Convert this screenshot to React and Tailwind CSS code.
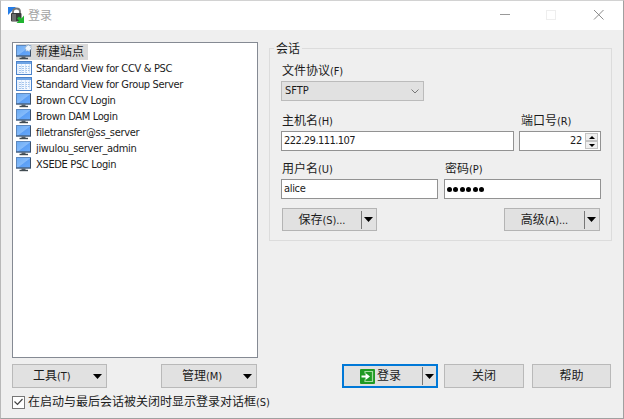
import React from 'react';

const SITES = [
  { icon: 'view', name: 'Standard View for CCV & PSC' },
  { icon: 'view', name: 'Standard View for Group Server' },
  { icon: 'site', name: 'Brown CCV Login' },
  { icon: 'site', name: 'Brown DAM Login' },
  { icon: 'site', name: 'filetransfer@ss_server' },
  { icon: 'site', name: 'jiwulou_server_admin' },
  { icon: 'site', name: 'XSEDE PSC Login' },
];

const CJK = "font-['Noto_Sans_CJK_SC',sans-serif] text-[12px]";
const LATIN = "font-['DejaVu_Sans_Condensed','DejaVu_Sans','Noto_Sans_CJK_SC',sans-serif] text-[11px] tracking-[-0.34px]";
const HOTKEY = "font-['DejaVu_Sans_Condensed','DejaVu_Sans','Noto_Sans_CJK_SC',sans-serif] text-[11px] tracking-[-0.1px]";

function Label({ text, hotkey }) {
  return (
    <span className="flex h-4 items-baseline whitespace-nowrap leading-[14px]">
      <span className={CJK}>{text}</span>
      {hotkey && <span className={HOTKEY}>{hotkey}</span>}
    </span>
  );
}

function Triangle() {
  return (
    <svg width="9" height="5" viewBox="0 0 9 5" className="shrink-0">
      <path d="M0 0h9L4.500 5z" fill="#000" />
    </svg>
  );
}

function SiteIcon({ isNew }) {
  return (
    <svg width="16" height="16" viewBox="0 0 16 16" className="shrink-0">
      <defs>
        <linearGradient id="screen" x1="0" y1="0" x2="1" y2="1">
          <stop offset="0" stopColor="#6aabf4" />
          <stop offset=".5" stopColor="#84bafa" />
          <stop offset=".55" stopColor="#5c9ff5" />
          <stop offset="1" stopColor="#68aafb" />
        </linearGradient>
      </defs>
      <rect x=".5" y="1.500" width="14" height="10.500" fill="url(#screen)" stroke="#5c87bd" />
      <path d="M0 12h15M14.500 2v10" stroke="#3c5069" />
      <path d="M5.500 12.500h4V14h-4z" fill="#56616b" />
      <path d="M3.500 13.800h8.500v1.400H3.500z" fill="#414b51" />
      {isNew && (
        <path
          d="M12 0l1.200 1.700 2-.2-.4 2 1.200 1.500-2 .8-.5 2-1.700-1-2 .5.200-2L8.500 4l1.700-1 .2-2 1.500.6z"
          fill="#edf5fd"
          stroke="#8eabc9"
          strokeWidth=".6"
        />
      )}
    </svg>
  );
}

function ViewIcon() {
  return (
    <svg width="16" height="14" viewBox="0 0 16 14" className="shrink-0">
      <rect x=".5" y=".5" width="15" height="13" fill="#f4f9ff" stroke="#4c83ca" />
      <path d="M1 1h14v2H1z" fill="#6fa5e6" />
      <path d="M3 5.500h2m1 0h2m1 0h2m1 0h2M3 7.500h2m1 0h2m1 0h2m1 0h2M3 9.500h2m1 0h2m1 0h2m1 0h2M3 11.500h2m1 0h2m1 0h2" stroke="#a5c6ed" />
      <path d="M2 4v9M5.500 3v9M9.500 3v9M13.500 3v9" stroke="#c8dcf5" strokeWidth=".7" />
    </svg>
  );
}

function AppIcon() {
  return (
    <svg width="17" height="17" viewBox="0 0 17 17" className="shrink-0">
      <path d="M0 0h8L0 8z" fill="#237ce8" />
      <path d="M5 8V4.500C5 .5 12 .5 12 4.500V8" fill="none" stroke="#777" strokeWidth="1.800" />
      <rect x="3" y="6" width="10.500" height="8.500" rx="1" fill="#3b3b3b" />
      <path d="M4 7h4v7H4z" fill="#6c6c6c" />
      <path d="M16 8.500V16H8.500l2.500-2.500-2-2L11 9.500l2.500 2z" fill="#20b430" />
    </svg>
  );
}

function LoginIcon() {
  return (
    <svg width="15" height="15" viewBox="0 0 15 15" className="shrink-0">
      <rect width="15" height="15" rx="1" fill="#209a24" />
      <path d="M5 4.500v-2h7.500v10H5v-2" fill="none" stroke="#a5dda0" strokeWidth="1.200" />
      <path d="M1.500 6.500h4V4l4.500 3.500L5.500 11V8.500h-4z" fill="#fff" />
    </svg>
  );
}

function SplitButton({ className, text, hotkey }) {
  return (
    <button className={'flex h-[23px] items-center border border-[#b4b4b4] bg-[#e1e1e1] ' + className}>
      <span className="flex flex-1 justify-center">
        <Label text={text} hotkey={hotkey} />
      </span>
      <span className="flex h-[18px] w-[15px] items-center border-l border-[#777] pl-[2px]">
        <Triangle />
      </span>
    </button>
  );
}

function MenuButton({ className, text, hotkey }) {
  return (
    <button className={'flex h-6 items-center justify-between border border-[#b9b9b9] bg-[#e1e1e1] pr-1 pl-5 ' + className}>
      <Label text={text} hotkey={hotkey} />
      <Triangle />
    </button>
  );
}

function Field({ className, children }) {
  return (
    <div className={'flex h-5 items-center border border-[#929292] bg-white pl-[2px] ' + LATIN + ' ' + className}>
      {children}
    </div>
  );
}

export default function App() {
  return (
    <div className="flex h-[419px] w-[624px] flex-col overflow-hidden border border-t-[#d2d2d2] border-r-[#a0a0a0] border-b-[#a0a0a0] border-l-[#b8b8b8] bg-[#efefef] text-[#1c1c1c]">
      <header className="flex h-[29px] shrink-0 items-center bg-white pl-[7px] text-[#a3a3a3]">
        <AppIcon />
        <span className="ml-[3px] flex-1">
          <Label text="登录" />
        </span>
        <svg width="124" height="29" viewBox="0 0 124 29" fill="none">
          <path d="M1 13.500h10" stroke="#999" />
          <rect x="47.500" y="9.500" width="9" height="9" stroke="#eee" />
          <path d="M95 9l9.500 9.500M104.500 9L95 18.500" stroke="#8b8b8b" />
        </svg>
      </header>

      <main className="flex h-[328px] shrink-0 pl-[11px]">
        <section className="mt-3 h-[316px] w-[246px] border border-[#858a93] bg-white pt-px pl-[3px]">
          <div className="flex h-4 w-[72px] items-center gap-1 bg-[#d9d9d9]">
            <SiteIcon isNew />
            <Label text="新建站点" />
          </div>
          {SITES.map((site) => (
            <div key={site.name} className={'flex h-4 items-center gap-1 whitespace-nowrap ' + LATIN}>
              {site.icon === 'view' ? <ViewIcon /> : <SiteIcon />}
              <span className="pt-[2px] leading-[14px]">{site.name}</span>
            </div>
          ))}
        </section>

        <fieldset className="mt-[18px] ml-[11px] h-[193px] w-[343px] border border-[#dcdcdc]">
          <div className="-mt-[8px] ml-1 flex h-[15px] w-[28px] justify-center bg-[#efefef]">
            <Label text="会话" />
          </div>
          <div className="mt-[7px] ml-3">
            <Label text="文件协议" hotkey="(F)" />
          </div>
          <div className={'mt-[2px] ml-[11px] flex h-5 w-[143px] items-center justify-between border border-[#bbb] bg-[#e1e1e1] pr-1 pl-[3px] ' + LATIN}>
            <span className="tracking-normal">SFTP</span>
            <svg width="8" height="5" viewBox="0 0 8 5" fill="none">
              <path d="M.5.5L4 4 7.500.5" stroke="#777" />
            </svg>
          </div>

          <div className="mt-[12px] ml-3 flex">
            <div className="w-[239px]">
              <Label text="主机名" hotkey="(H)" />
            </div>
            <Label text="端口号" hotkey="(R)" />
          </div>
          <div className="mt-[2px] ml-[11px] flex gap-[5px]">
            <Field className="w-[233px]"><span className="tracking-[-0.54px]">222.29.111.107</span></Field>
            <Field className="w-[82px] justify-end">
              <span className="mr-[3px]">22</span>
              <span className="mr-[2px] flex h-4 w-[13px] flex-col justify-between">
                <span className="flex h-2 items-center justify-center border border-[#c3c3c3] bg-[#efefef]">
                  <svg width="6" height="3" viewBox="0 0 6 3"><path d="M0 3h6L3 0z" /></svg>
                </span>
                <span className="flex h-2 items-center justify-center border border-[#c3c3c3] bg-[#efefef]">
                  <svg width="6" height="3" viewBox="0 0 6 3"><path d="M0 0h6L3 3z" /></svg>
                </span>
              </span>
            </Field>
          </div>

          <div className="mt-[10px] ml-3 flex">
            <div className="w-[163px]">
              <Label text="用户名" hotkey="(U)" />
            </div>
            <Label text="密码" hotkey="(P)" />
          </div>
          <div className="mt-[2px] ml-[11px] flex gap-[6px]">
            <Field className="w-[157px]">alice</Field>
            <Field className="w-[157px] gap-[1.4px]">
              {[0, 1, 2, 3, 4, 5].map((dot) => (
                <span key={dot} className="h-[5px] w-[5px] rounded-full bg-black" />
              ))}
            </Field>
          </div>

          <div className="mt-[9px] mr-[11px] ml-3 flex justify-between">
            <SplitButton className="w-[95px]" text="保存" hotkey="(S)..." />
            <SplitButton className="w-[96px]" text="高级" hotkey="(A)..." />
          </div>
        </fieldset>
      </main>

      <div className="mt-[6px] flex h-6 shrink-0 pl-[11px]">
        <MenuButton className="w-[95px]" text="工具" hotkey="(T)" />
        <MenuButton className="ml-[54px] w-[96px]" text="管理" hotkey="(M)" />
        <button className="ml-[85px] flex w-[96px] items-center border-2 border-[#0078d7] bg-[#e1e1e1] pl-4">
          <LoginIcon />
          <span className="ml-[2px] flex-1">
            <Label text="登录" />
          </span>
          <span className="flex h-[18px] w-[14px] items-center border-l border-[#777] pl-[2px]">
            <Triangle />
          </span>
        </button>
        <button className="ml-[6px] flex w-20 items-center justify-center border border-[#b9b9b9] bg-[#e1e1e1]">
          <Label text="关闭" />
        </button>
        <button className="ml-2 flex w-[79px] items-center justify-center border border-[#b9b9b9] bg-[#e1e1e1]">
          <Label text="帮助" />
        </button>
      </div>

      <div className="mt-[6px] flex items-center pl-[11px]">
        <span className="mr-[3px] flex h-[13px] w-[13px] items-center justify-center border border-[#777] bg-white">
          <svg width="9" height="8" viewBox="0 0 9 8" fill="none">
            <path d="M.5 3.500L3.500 6.500 8.500 1" stroke="#444" strokeWidth="1.200" />
          </svg>
        </span>
        <Label text="在启动与最后会话被关闭时显示登录对话框" hotkey="(S)" />
      </div>
    </div>
  );
}
